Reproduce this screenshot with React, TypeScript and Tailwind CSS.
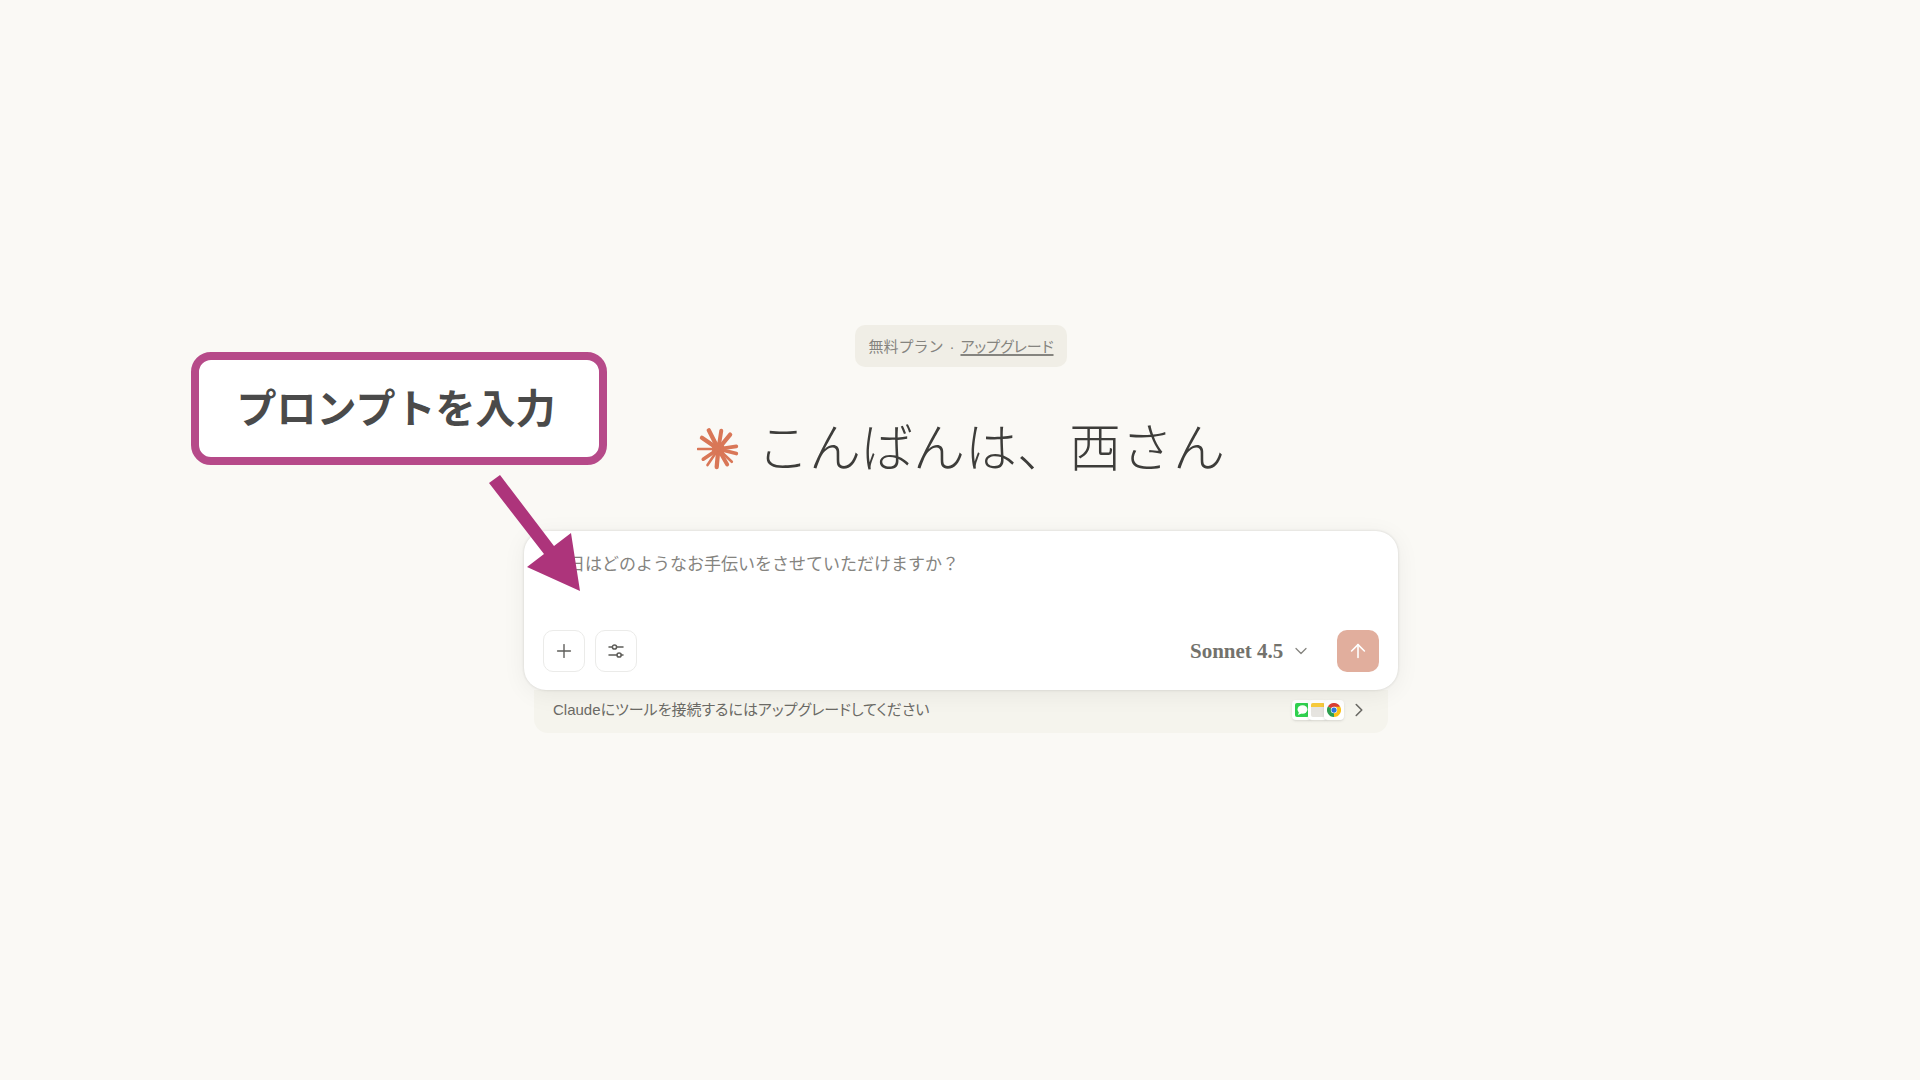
import { ArrowUp, ChevronDown, ChevronRight, Plus } from "lucide-react";

const rays = [
  [70, 41, 13], [108, 42, 12], [135, 54, 13], [154, 90, 11], [154, 112, 11], [140, 137, 8],
  [126, 145, 12], [94, 153, 13], [66, 147, 8], [53, 129, 11], [37, 98, 8], [49, 64, 13],
];

function Starburst() {
  return (
    <svg className="size-[42px] shrink-0" viewBox="34 34 128 128" stroke="#d97757" strokeLinecap="round" aria-hidden="true">
      <circle cx="99" cy="98" r="20" fill="#d97757" stroke="none" />
      {rays.map(([x, y, w]) => (
        <line key={`${x}-${y}`} x1="99" y1="98" x2={x} y2={y} strokeWidth={w} />
      ))}
    </svg>
  );
}

function SlidersIcon() {
  return (
    <svg className="size-4" viewBox="0 0 16 16" fill="none" stroke="currentColor" strokeWidth="1.5" strokeLinecap="round" aria-hidden="true">
      <path d="M1 4h3.400M8.600 4H15M1 12h8M13.200 12H15" />
      <circle cx="6.500" cy="4" r="2.100" />
      <circle cx="11.100" cy="12" r="2.100" />
    </svg>
  );
}

function AppIcons() {
  return (
    <span className="flex" aria-hidden="true">
      <span className="flex size-5 items-center justify-center rounded bg-white shadow-sm">
        <svg className="size-[14px]" viewBox="0 0 14 14">
          <rect width="14" height="14" rx="2" fill="#2fd14f" />
          <ellipse cx="7.500" cy="6.500" rx="5" ry="4.200" fill="#fff" />
          <path d="M4 9l-1 3 3.500-1.500z" fill="#fff" />
        </svg>
      </span>
      <span className="-ml-1 flex size-5 items-center justify-center rounded bg-white shadow-sm">
        <svg className="size-[14px]" viewBox="0 0 14 14">
          <rect width="14" height="14" rx="2" fill="#e6e4e0" />
          <path d="M0 4V2a2 2 0 0 1 2-2h10a2 2 0 0 1 2 2v2z" fill="#f8cb3c" />
        </svg>
      </span>
      <span className="-ml-1 flex size-5 items-center justify-center rounded bg-white shadow-sm">
        <svg className="size-[14px]" viewBox="0 0 48 48">
          <path d="M24 24 3.200 12A24 24 0 0 1 44.800 12z" fill="#db3f35" />
          <path d="M24 24 44.800 12A24 24 0 0 1 24 48z" fill="#fbc116" />
          <path d="M24 24v24A24 24 0 0 1 3.200 12z" fill="#2d9f50" />
          <path d="M24 13h21.300L33.500 30 24 48l9-19z" fill="#fbc116" />
          <circle cx="24" cy="24" r="11" fill="#fff" />
          <circle cx="24" cy="24" r="9" fill="#2f78e0" />
        </svg>
      </span>
    </span>
  );
}

function Callout() {
  return (
    <div className="pointer-events-none absolute -left-[333px] top-[27px] z-20">
      <p className="flex h-[113px] w-[416px] items-center justify-center rounded-[20px] border-8 border-[#b64a89] bg-white pr-1.5 text-[40px] leading-none font-bold text-[#4a4a4a]">
        プロンプトを入力
      </p>
      <svg className="absolute left-[298px] top-[122px] h-[118px] w-[92px]" viewBox="0 0 92 118" fill="#ad347b" aria-hidden="true">
        <path d="M0 9 11 1 65 72 82 59 91 117 38 93 55 80z" />
      </svg>
    </div>
  );
}

export default function App() {
  return (
    <main className="min-h-screen bg-[#faf9f5] pt-[325px] pr-6 pl-[26px] font-['Liberation_Sans','Noto_Sans_CJK_JP',sans-serif] text-[#3d3d3a]">
      <div className="relative mx-auto flex max-w-[874px] flex-col items-center">
        <Callout />

        <p className="flex h-[42px] items-center gap-1.5 rounded-[10px] bg-[#f0eee6] px-[13px] pt-0.5 text-[15px] text-[#85847f]">
          無料プラン
          <span>·</span>
          <a href="#upgrade" className="underline decoration-2 underline-offset-2 [font-feature-settings:'palt']">
            アップグレード
          </a>
        </p>

        <h1 className="mt-[50px] flex items-center gap-[18px] text-[52px] leading-[64px] font-light">
          <Starburst />
          こんばんは、西さん
        </h1>

        <form className="relative z-10 mt-[50px] flex w-full flex-col rounded-[22px] bg-white px-[19px] pt-[22px] pb-[18px] shadow-[0_4px_24px_rgba(0,0,0,0.06),0_0_3px_rgba(0,0,0,0.14)]">
          <textarea
            aria-label="プロンプト"
            rows={1}
            placeholder="今日はどのようなお手伝いをさせていただけますか？"
            className="h-[77px] resize-none px-2 text-[17px] leading-6 outline-none placeholder:text-[#85847f]"
          />
          <div className="flex items-center gap-[10px]">
            <button type="button" aria-label="追加" className="flex size-[42px] items-center justify-center rounded-[10px] border border-[#ebebe9] text-[#5e5d59]">
              <Plus size={22} strokeWidth={1.5} />
            </button>
            <button type="button" aria-label="ツール" className="flex size-[42px] items-center justify-center rounded-[10px] border border-[#ebebe9] text-[#5e5d59]">
              <SlidersIcon />
            </button>
            <div className="relative ml-auto flex items-center">
              <select aria-label="モデル" className="appearance-none bg-transparent pr-[43px] font-['Liberation_Serif',serif] text-[21px] leading-7 font-bold text-[#73726c] outline-none">
                <option>Sonnet 4.5</option>
              </select>
              <ChevronDown size={20} strokeWidth={1.5} className="pointer-events-none absolute right-4 text-[#85847f]" />
            </div>
            <button type="submit" aria-label="送信" className="flex size-[42px] items-center justify-center rounded-[10px] bg-[#e1ae9d] text-white">
              <ArrowUp size={22} strokeWidth={1.75} />
            </button>
          </div>
        </form>

        <div className="w-full px-[10px]">
          <button type="button" className="flex h-[43px] w-full items-center rounded-b-[14px] bg-[#f5f4ed] pr-[18px] pb-1 pl-[19px] text-[15px] leading-6 text-[#6b6a65] [font-feature-settings:'palt']">
            Claudeにツールを接続するにはアップグレードしてください
            <span className="ml-auto flex items-center gap-1">
              <AppIcons />
              <ChevronRight size={22} strokeWidth={1.75} />
            </span>
          </button>
        </div>
      </div>
    </main>
  );
}
